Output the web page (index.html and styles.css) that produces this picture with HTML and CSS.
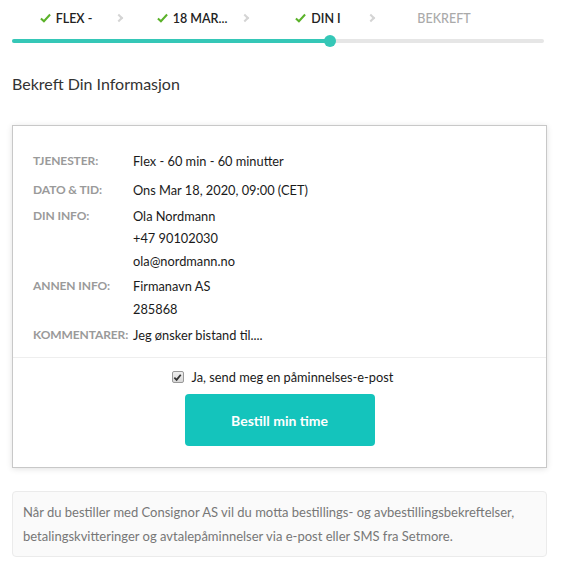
FILE: index.html
```html
<!DOCTYPE html>
<html lang="no">
<head>
<meta charset="utf-8">
<title>Bekreft</title>
<link rel="stylesheet" href="styles.css">
</head>
<body>
<div class="page">
  <nav class="steps">
    <div class="step done"><svg class="tick" viewBox="0 0 12 10" width="11" height="10"><path d="M1 5.5 L4.3 8.6 L11 1.2" fill="none" stroke="#5bb22a" stroke-width="2.2"/></svg><span>FLEX -</span></div>
    <div class="step done"><svg class="tick" viewBox="0 0 12 10" width="11" height="10"><path d="M1 5.5 L4.3 8.6 L11 1.2" fill="none" stroke="#5bb22a" stroke-width="2.2"/></svg><span>18 MAR...</span></div>
    <div class="step done"><svg class="tick" viewBox="0 0 12 10" width="11" height="10"><path d="M1 5.5 L4.3 8.6 L11 1.2" fill="none" stroke="#5bb22a" stroke-width="2.2"/></svg><span>DIN I</span></div>
    <div class="step todo"><span>BEKREFT</span></div>
  </nav>
  <div class="progress"><div class="fill" style="width:318px"></div><div class="dot"></div></div>

  <h1 class="title">Bekreft Din Informasjon</h1>

  <section class="card">
    <div class="details">
      <div class="row first"><div class="label">Tjenester:</div><div class="value">Flex - 60 min - 60 minutter</div></div>
      <div class="row"><div class="label">Dato &amp; tid:</div><div class="value">Ons Mar 18, 2020, 09:00 (CET)</div></div>
      <div class="row"><div class="label">Din info:</div><div class="value">Ola Nordmann<br>+47 90102030<br>ola@nordmann.no</div></div>
      <div class="row"><div class="label">Annen info:</div><div class="value">Firmanavn AS<br>285868</div></div>
      <div class="row"><div class="label">Kommentarer:</div><div class="value">Jeg ønsker bistand til....</div></div>
    </div>
    <div class="actions">
      <label class="remind"><span class="box"><svg viewBox="0 0 10 10" width="9" height="9"><path d="M1.5 5.2 L4 7.6 L8.6 2" fill="none" stroke="#333" stroke-width="2"/></svg></span>Ja, send meg en påminnelses-e-post</label>
      <button class="book">Bestill min time</button>
    </div>
  </section>

  <div class="notice">Når du bestiller med Consignor AS vil du motta bestillings- og avbestillingsbekreftelser, betalingskvitteringer og avtalepåminnelser via e-post eller SMS fra Setmore.</div>
</div>
</body>
</html>
```

FILE: styles.css
```css
* { box-sizing: border-box; }
html, body { margin: 0; padding: 0; background: #fff; }
body { font-family: Lato, "Open Sans", Arial, sans-serif; color: #222; }
.page { padding: 0 18px 0 12px; }

.steps { display: flex; padding-left: 0; margin-left: -9px; height: 36px; align-items: center; }
.step { width: 126px; position: relative; display: flex; justify-content: center; align-items: center; gap: 5px; font-size: 12.5px; font-weight: 600; color: #222; }
.step.todo { color: #aaa; font-weight: 500; }
.step:not(:last-child)::after { content: ""; position: absolute; right: 7px; top: 50%; width: 4px; height: 4px; border-top: 2px solid #d4d4d4; border-right: 2px solid #d4d4d4; transform: translateY(-50%) rotate(45deg); }
.tick { display: block; }

.progress { position: relative; height: 4px; background: #e6e6e6; border-radius: 2px; margin: 3px 3px 0 0; }
.fill { height: 4px; background: #35c7b7; border-radius: 2px; }
.dot { position: absolute; left: 312px; top: -4px; width: 12px; height: 12px; border-radius: 50%; background: #35c7b7; }

.title { font-size: 16px; font-weight: 400; color: #333; margin: 31px 0 0; line-height: 20px; }

.card { margin-top: 31px; border: 1px solid #c8c8c8; box-shadow: 0 1px 6px rgba(0,0,0,0.12); background: #fff; }
.details { padding: 24px 20px 8px; border-bottom: 1px solid #eee; }
.row { display: flex; line-height: 22.5px; margin-bottom: 3.3px; }
.row.first { margin-bottom: 6.3px; }
.label { width: 100px; flex: none; font-size: 12px; font-weight: 700; color: #9a9a9a; text-transform: uppercase; letter-spacing: -0.1px; }
.value { font-size: 12.8px; color: #1a1a1a; }

.actions { display: flex; flex-direction: column; align-items: center; padding: 8px 0 21px; }
.remind { display: flex; align-items: center; gap: 8px; font-size: 12.8px; color: #1a1a1a; line-height: 22px; margin-left: 6px; }
.box { width: 12px; height: 12px; border: 1px solid #999; border-radius: 2px; background: linear-gradient(#eee, #d8d8d8); display: flex; align-items: center; justify-content: center; }
.book { margin-top: 6px; width: 190px; height: 52px; border: none; border-radius: 4px; background: #14c4bc; color: #fff; font-family: Lato, Arial, sans-serif; font-size: 14px; font-weight: 700; }

.notice { margin-top: 23px; background: #fafafa; border: 1px solid #ebebeb; border-radius: 4px; padding: 8px 10px; font-size: 13px; line-height: 24px; color: #777; }
```
